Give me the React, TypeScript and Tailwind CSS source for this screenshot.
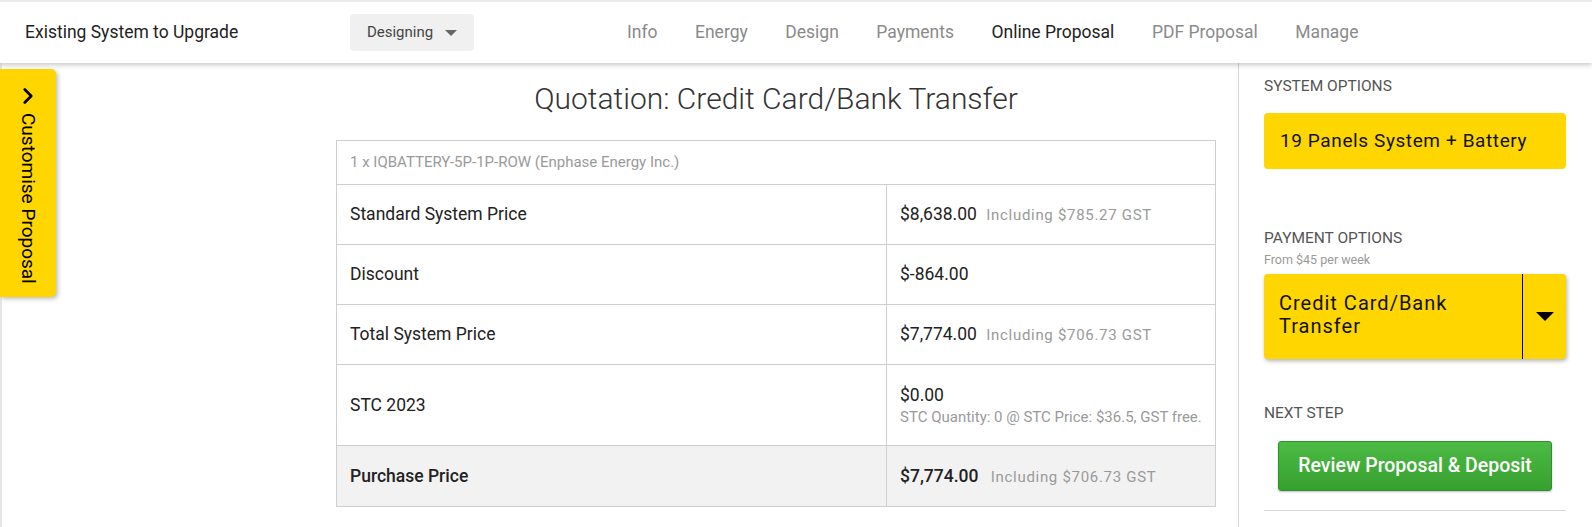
import { ChevronRight } from "lucide-react";

const NAV = ["Info", "Energy", "Design", "Payments", "Online Proposal", "PDF Proposal", "Manage"];

function Caret({ className }: { className?: string }) {
  return (
    <svg viewBox="0 0 10 5" className={className} fill="currentColor">
      <path d="M0 0h10L5 5z" />
    </svg>
  );
}

export default function App() {
  return (
    <div className="h-screen overflow-hidden bg-white text-[#222] font-['Roboto','Liberation_Sans',sans-serif]">
      <header className="relative z-10 flex h-[63px] items-center border-t-2 border-[#ebebeb] bg-white shadow-[0_2px_5px_rgba(0,0,0,0.22)]">
        <div className="w-[350px] pl-[25px] text-[17.5px] text-[#222]">Existing System to Upgrade</div>
        <button className="flex h-[37px] w-[124px] items-center justify-center gap-[12px] rounded-[4px] bg-[#f0f0f0] text-[15px] text-[#444]">
          Designing
          <Caret className="h-[6px] w-[12px] text-[#666]" />
        </button>
        <nav className="ml-[153px] flex gap-[37.5px] text-[17.5px]">
          {NAV.map((n) => (
            <span key={n} className={n === "Online Proposal" ? "text-[#222]" : "text-[#8a8a8a]"}>
              {n}
            </span>
          ))}
        </nav>
      </header>

      <div className="flex">
        <main className="relative flex-1 border-l-2 border-[#e6e6e6] pb-[20px]">
          <div className="absolute left-[-2px] top-[6px] flex h-[228px] w-[56px] flex-col items-center rounded-r-[5px] bg-[#ffd600] pt-[14px] shadow-[2px_2px_4px_rgba(0,0,0,0.25)]">
            <ChevronRight className="h-[26px] w-[26px] text-black" strokeWidth={2.5} />
            <span className="mt-[4px] text-[19px] text-black [writing-mode:vertical-rl]">Customise Proposal</span>
          </div>

          <div className="ml-[334px] w-[880px]">
            <h1 className="pt-[16px] pb-[21px] text-center text-[30px] font-light leading-[40px] text-[#333]">
              Quotation: Credit Card/Bank Transfer
            </h1>
            <table className="w-full border-collapse text-[17.5px]">
              <tbody>
                <tr className="h-[44px]">
                  <td colSpan={2} className="border border-[#cfcfcf] px-[13px] text-[15px] text-[#9a9a9a]">
                    1 x IQBATTERY-5P-1P-ROW (Enphase Energy Inc.)
                  </td>
                </tr>
                <tr className="h-[60px]">
                  <td className="w-[550px] border border-[#cfcfcf] px-[13px]">Standard System Price</td>
                  <td className="border border-[#cfcfcf] px-[13px]">
                    $8,638.00{" "}
                    <span className="ml-[5px] text-[15px] tracking-[0.7px] text-[#9a9a9a]">Including $785.27 GST</span>
                  </td>
                </tr>
                <tr className="h-[60px]">
                  <td className="border border-[#cfcfcf] px-[13px]">Discount</td>
                  <td className="border border-[#cfcfcf] px-[13px]">$-864.00</td>
                </tr>
                <tr className="h-[60px]">
                  <td className="border border-[#cfcfcf] px-[13px]">Total System Price</td>
                  <td className="border border-[#cfcfcf] px-[13px]">
                    $7,774.00{" "}
                    <span className="ml-[5px] text-[15px] tracking-[0.7px] text-[#9a9a9a]">Including $706.73 GST</span>
                  </td>
                </tr>
                <tr className="h-[81px]">
                  <td className="border border-[#cfcfcf] px-[13px]">STC 2023</td>
                  <td className="border border-[#cfcfcf] px-[13px]">
                    <div className="leading-[24px]">$0.00</div>
                    <div className="text-[15px] leading-[20px] text-[#9a9a9a]">
                      STC Quantity: 0 @ STC Price: $36.5, GST free.
                    </div>
                  </td>
                </tr>
                <tr className="h-[61px] bg-[#f2f2f2]">
                  <td className="border border-[#cfcfcf] px-[13px] font-medium">Purchase Price</td>
                  <td className="border border-[#cfcfcf] px-[13px]">
                    <span className="font-medium">$7,774.00</span>{" "}
                    <span className="ml-[8px] text-[15px] tracking-[0.7px] text-[#9a9a9a]">Including $706.73 GST</span>
                  </td>
                </tr>
              </tbody>
            </table>
          </div>
        </main>

        <aside className="w-[354px] border-l border-[#d6d6d6] pl-[25px] pr-[26px]">
          <div className="pt-[13px] text-[15.5px] uppercase leading-[20px] text-[#555]">System Options</div>
          <div className="mt-[17px] flex h-[56px] items-center rounded-[4px] bg-[#ffd600] px-[16px] text-[19px] tracking-[0.6px] text-[#111]">
            19 Panels System + Battery
          </div>

          <div className="mt-[59px] text-[15.5px] uppercase leading-[20px] text-[#555]">Payment Options</div>
          <div className="mt-[4px] text-[12.5px] leading-[16px] text-[#9a9a9a]">From $45 per week</div>
          <div className="mt-[6px] flex h-[85px] rounded-[4px] bg-[#ffd600] shadow-[1px_2px_4px_rgba(0,0,0,0.3)]">
            <div className="flex flex-1 items-center px-[15px] pb-[4px] text-[20px] leading-[23px] tracking-[1px] text-[#111]">
              Credit Card/Bank
              <br />
              Transfer
            </div>
            <div className="flex w-[44px] items-center justify-center border-l border-black">
              <Caret className="h-[9px] w-[18px] text-black" />
            </div>
          </div>

          <div className="mt-[44px] text-[15.5px] uppercase leading-[20px] text-[#555]">Next Step</div>
          <div className="mt-[18px] flex justify-center">
            <button className="h-[50px] w-[274px] rounded-[3px] border border-[#2f8f2a] bg-gradient-to-b from-[#4cbb45] to-[#36a02f] text-[19.5px] font-medium text-white shadow-[0_1px_2px_rgba(0,0,0,0.25)]">
              Review Proposal &amp; Deposit
            </button>
          </div>
          <div className="mt-[19px] border-t border-[#d6d6d6]" />
        </aside>
      </div>
    </div>
  );
}
